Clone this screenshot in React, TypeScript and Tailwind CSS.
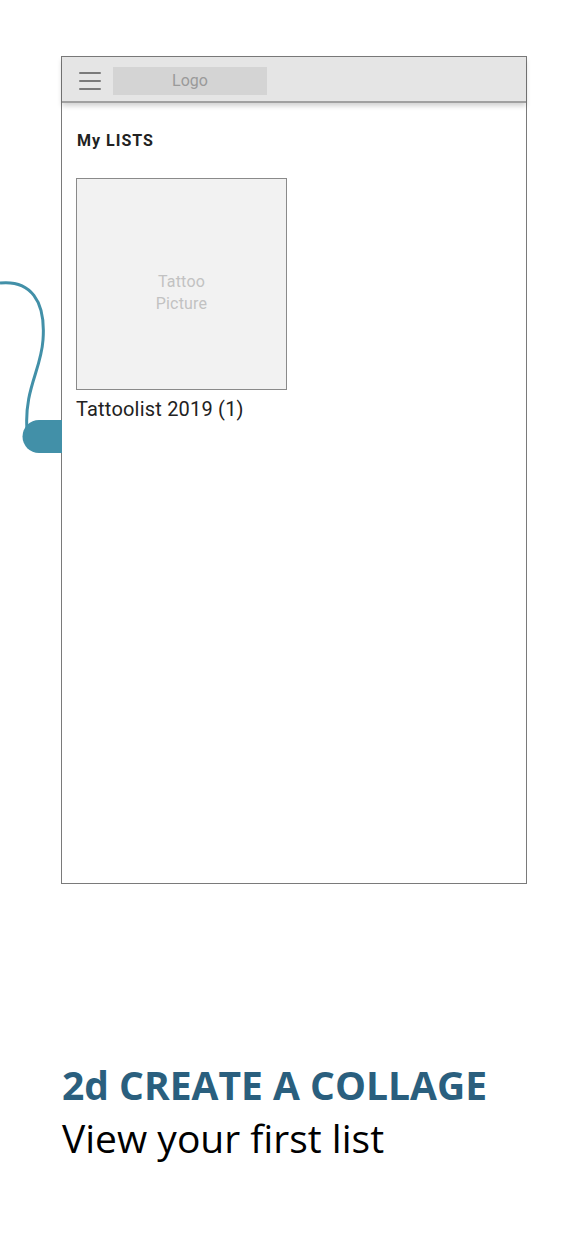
import React from 'react';

const Hamburger: React.FC = () => (
  <svg width="22" height="20" viewBox="0 0 22 20" className="shrink-0 mt-[3px]">
    <g stroke="#7a7a7a" strokeWidth="2" strokeLinecap="round">
      <line x1="1" y1="2" x2="21" y2="2" />
      <line x1="1" y1="10" x2="21" y2="10" />
      <line x1="1" y1="18" x2="21" y2="18" />
    </g>
  </svg>
);

const Connector: React.FC = () => (
  <svg width="62" height="190" viewBox="0 0 62 190" className="absolute left-0 top-[270px]">
    <path
      d="M0 13 C 30 10, 46 30, 43 70 C 41 100, 24 120, 27 160"
      fill="none"
      stroke="#4290a8"
      strokeWidth="3"
    />
    <path d="M39 150 H62 V183 H39 A16.5 16.5 0 0 1 39 150 Z" fill="#4290a8" />
  </svg>
);

const ListCard: React.FC<{ title: string }> = ({ title }) => (
  <div className="flex flex-col w-[211px]">
    <div className="h-[212px] border border-[#8a8a8a] bg-[#f2f2f2] flex items-center justify-center pt-[18px]">
      <p className="text-center text-[16px] leading-[22px] text-[#c2c2c2] font-['Roboto',sans-serif] tracking-[0.2px]">
        Tattoo
        <br />
        Picture
      </p>
    </div>
    <p className="mt-[7px] text-[20px] leading-[24px] text-[#222] font-['Roboto',sans-serif] tracking-[0.2px]">{title}</p>
  </div>
);

export default function App() {
  return (
    <div className="relative w-[587px] h-[1260px] bg-white overflow-hidden">
      <Connector />
      <div className="ml-[61px] mt-[56px] w-[466px] h-[828px] border border-[#7a7a7a] bg-white flex flex-col">
        <div className="h-[46px] bg-[#e5e5e5] border-b-2 border-[#a0a0a0] shadow-[0_3px_5px_rgba(0,0,0,0.18)] flex items-center pl-[17px] gap-[12px]">
          <Hamburger />
          <div className="mt-[3px] w-[154px] h-[28px] bg-[#d4d4d4] flex items-center justify-center text-[16px] text-[#9a9a9a] font-['Roboto',sans-serif]">
            Logo
          </div>
        </div>
        <div className="px-[14px] pt-[28px]">
          <h2 className="pl-[1px] text-[16px] leading-[20px] font-bold tracking-[1px] text-[#222] font-['Roboto',sans-serif]">
            My LISTS
          </h2>
          <div className="mt-[27px]">
            <ListCard title="Tattoolist 2019 (1)" />
          </div>
        </div>
      </div>
      <div className="ml-[62px] mt-[176px]">
        <h1 className="text-[39px] leading-[50px] font-bold text-[#2a5f7e] font-['Open_Sans',sans-serif]">
          2d CREATE A COLLAGE
        </h1>
        <p className="text-[39px] leading-[56px] text-black font-['Open_Sans',sans-serif]">View your first list</p>
      </div>
    </div>
  );
}
